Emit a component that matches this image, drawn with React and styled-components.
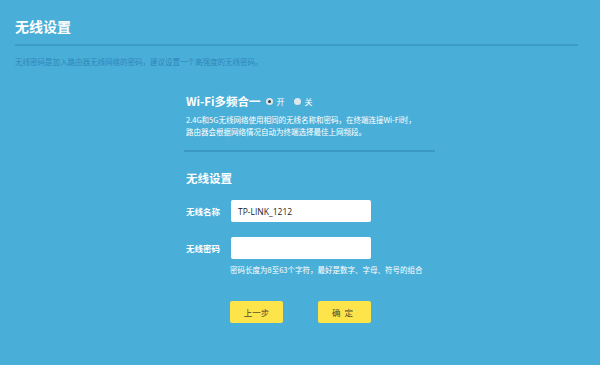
import React from "react";
import styled, { createGlobalStyle } from "styled-components";

const Global = createGlobalStyle`
  html, body { margin: 0; padding: 0; }
  body {
    background: #4aafd8;
    font-family: "Noto Sans CJK SC", "Noto Sans", sans-serif;
    width: 600px;
    height: 365px;
    overflow: hidden;
  }
`;

const Page = styled.div`
  width: 600px;
  height: 365px;
  box-sizing: border-box;
  padding: 18px 22px 0 15px;
  background: #4aafd8;
`;

const Header = styled.div`
  border-bottom: 2px solid #3c9cc6;
  padding-bottom: 9px;
`;

const Title = styled.h1`
  margin: 0;
  font-size: 14px;
  line-height: 17px;
  font-weight: 700;
  color: #fff;
`;

const Intro = styled.p`
  margin: 11px 0 0;
  font-size: 7.5px;
  line-height: 10px;
  color: #2f86b8;
`;

const Panel = styled.div`
  width: 250px;
  margin: 27px 0 0 170px;
  display: flex;
  flex-direction: column;
`;

const Row = styled.div`
  display: flex;
  align-items: center;
  gap: ${(p) => p.$gap || 8}px;
`;

const Heading = styled.div`
  font-size: 11.5px;
  line-height: 15px;
  font-weight: 700;
  color: #fff;
  margin-left: 1px;
`;

const Radio = styled.label`
  display: flex;
  align-items: center;
  gap: 4px;
  font-size: 8px;
  color: #fff;
  margin-left: ${(p) => p.$ml || 0}px;
`;

const Dot = styled.span`
  width: 7px;
  height: 7px;
  border-radius: 50%;
  background: #dfe6ea;
  box-sizing: border-box;
  display: flex;
  align-items: center;
  justify-content: center;
  &::after {
    content: "";
    width: 3px;
    height: 3px;
    border-radius: 50%;
    background: ${(p) => (p.$on ? "#333c42" : "transparent")};
  }
`;

const Note = styled.p`
  margin: 5px 0 0 1px;
  font-size: 7.5px;
  line-height: 12px;
  color: #fff;
  white-space: nowrap;
`;

const Divider = styled.div`
  height: 2px;
  background: #3a98c2;
  margin: 12px 0 0 -1px;
`;

const Heading2 = styled(Heading)`
  margin-top: 19px;
`;

const Field = styled.div`
  display: flex;
  align-items: center;
  margin-top: ${(p) => p.$mt}px;
`;

const Label = styled.span`
  width: 45px;
  font-size: 8.5px;
  font-weight: 700;
  color: #fff;
  margin-left: 1px;
`;

const Input = styled.div`
  width: 140px;
  height: 22px;
  box-sizing: border-box;
  background: #fff;
  border-radius: 2px;
  padding-left: 7px;
  display: flex;
  align-items: center;
  font-size: 8.5px;
  color: #222;
  font-family: "Open Sans", "Noto Sans", sans-serif;
`;

const Hint = styled.p`
  margin: 6px 0 0 45px;
  font-size: 7.5px;
  line-height: 10px;
  color: #fff;
  white-space: nowrap;
`;

const Buttons = styled.div`
  display: flex;
  gap: 35px;
  margin: 26px 0 0 45px;
`;

const Button = styled.button`
  width: 53px;
  height: 22px;
  border: none;
  border-radius: 2px;
  background: #fde44a;
  color: #4a4a30;
  font-family: "Noto Sans CJK SC", sans-serif;
  font-size: 8.5px;
  padding: 0;
  letter-spacing: ${(p) => p.$ls || 0}px;
`;

export default function App() {
  return (
    <>
      <Global />
      <Page>
        <Header>
          <Title>无线设置</Title>
        </Header>
        <Intro>无线密码是加入路由器无线网络的密码，建议设置一个高强度的无线密码。</Intro>
        <Panel>
          <Row $gap={5}>
            <Heading>Wi-Fi多频合一</Heading>
            <Radio>
              <Dot $on />开
            </Radio>
            <Radio $ml={4}>
              <Dot />关
            </Radio>
          </Row>
          <Note>
            2.4G和5G无线网络使用相同的无线名称和密码，在终端连接Wi-Fi时，
            <br />
            路由器会根据网络情况自动为终端选择最佳上网频段。
          </Note>
          <Divider />
          <Heading2>无线设置</Heading2>
          <Field $mt={14}>
            <Label>无线名称</Label>
            <Input>TP-LINK_1212</Input>
          </Field>
          <Field $mt={15}>
            <Label>无线密码</Label>
            <Input />
          </Field>
          <Hint>密码长度为8至63个字符，最好是数字、字母、符号的组合</Hint>
          <Buttons>
            <Button>上一步</Button>
            <Button $ls={4}>确定</Button>
          </Buttons>
        </Panel>
      </Page>
    </>
  );
}
